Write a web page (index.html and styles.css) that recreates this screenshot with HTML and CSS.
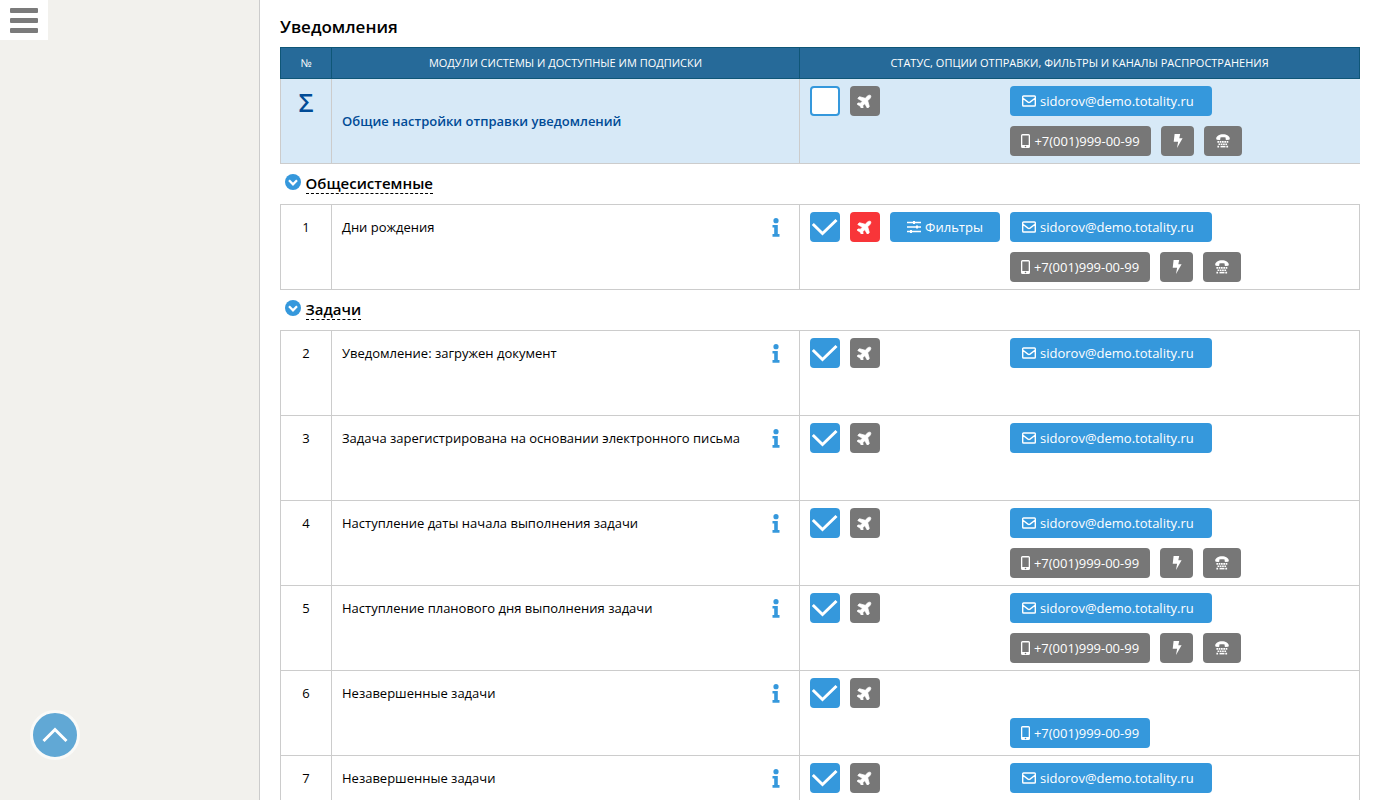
FILE: index.html
```html
<!DOCTYPE html>
<html lang="ru">
<head>
<meta charset="utf-8">
<title>Уведомления</title>
<link rel="stylesheet" href="styles.css">
</head>
<body>
<svg class="sprite" aria-hidden="true">
  <symbol id="plane" viewBox="0 0 576 512"><path transform="rotate(-45 288 256)" stroke="currentColor" stroke-width="24" d="M480 192H365.710L260.610 8.060A16 16 0 0 0 246.710 0h-65.500c-10.630 0-18.300 10.170-15.380 20.390L214.860 192H112l-43.200-57.600c-3-4-7.800-6.400-12.800-6.400H16C5.600 128-2 137.800.5 147.900L32 256 .5 364.100C-2 374.200 5.600 384 16 384h40c5 0 9.800-2.400 12.800-6.400L112 320h102.860l-49 171.600c-2.900 10.200 4.700 20.400 15.400 20.400h65.500c5.700 0 11-3.100 13.900-8.100L365.710 320H480c35.300 0 96-28.700 96-64s-60.700-64-96-64z"/></symbol>
  <symbol id="mail" viewBox="0 0 14 12"><path d="M1.500 1h11a.8.8 0 0 1 .8.8v8.400a.8.8 0 0 1-.8.8h-11a.8.8 0 0 1-.8-.8V1.800A.8.8 0 0 1 1.500 1zM.9 3.200l5.100 3.900q1 .7 2 0l5.100-3.900" fill="none" stroke="currentColor" stroke-width="1.400"/></symbol>
  <symbol id="phone" viewBox="0 0 9 14"><path fill-rule="evenodd" d="M1.500 0h6A1.500 1.500 0 0 1 9 1.500v11A1.500 1.500 0 0 1 7.500 14h-6A1.500 1.500 0 0 1 0 12.500v-11A1.500 1.500 0 0 1 1.500 0zM1.300 1.400v9.500h6.400V1.400zM4.500 11.700a.8.8 0 1 0 0 1.600.8.8 0 0 0 0-1.600z"/></symbol>
  <symbol id="bolt" viewBox="0 0 10 14"><path d="M1.600 0h5.600L6.300 4.300h3.300L4 14l1.100-6.200H.7z"/></symbol>
  <symbol id="tty" viewBox="0 0 14 14"><path d="M.2 4.800C0 2 3.500.2 7 .2s7 1.800 6.800 4.600l-.5 1-3 .1-.6-.5-.1-1.800c-1.700-.6-3.500-.6-5.200 0l-.1 1.800-.6.5-3-.1z"/><path d="M1.400 7.900h11.300M2.500 10.200h9.200M1.400 12.600h2.300m6.600 0h2.400" fill="none" stroke="currentColor" stroke-width="1.600" stroke-dasharray="1.700 .6"/><path d="M4.500 11.800h5v1.600h-5z"/></symbol>
  <symbol id="sliders" viewBox="0 0 14 12"><path d="M0 1.500h14M0 6h14M0 10.500h14" stroke="currentColor" stroke-width="1.500"/><path d="M6 0h2v3H6zM9 4.500h2v3H9zM3 9h2v3H3z"/></symbol>
  <symbol id="info" viewBox="0 0 8 19"><circle cx="4" cy="2.700" r="2.600"/><path d="M.5 7h5.300v9H7.500v2.800h-7V16h1.700V9.600H.5z"/></symbol>
  <symbol id="down" viewBox="0 0 16 16"><circle cx="8" cy="8" r="8"/><path d="M4 6.300l4 4 4-4" fill="none" stroke="#fff" stroke-width="2.300"/></symbol>
</svg>

<button class="menu" aria-label="Меню"><span></span><span></span><span></span></button>
<aside class="side">
  <a class="up" href="#top" aria-label="Наверх"><svg viewBox="0 0 26 16"><path d="M1.500 14 13 2.500 24.500 14" fill="none" stroke="#fff" stroke-width="3"/></svg></a>
</aside>

<main class="main" id="top">
  <h1 class="title">Уведомления</h1>
  <table class="grid">
    <colgroup><col class="c-num"><col><col class="c-opts"></colgroup>
    <thead>
      <tr><th>№</th><th>Модули системы и доступные им подписки</th><th>Статус, опции отправки, фильтры и каналы распространения</th></tr>
    </thead>
    <tbody>
      <tr class="total">
        <td class="num sigma">Σ</td>
        <td class="name">Общие настройки отправки уведомлений</td>
        <td><div class="opts">
          <input type="checkbox" class="tick" aria-label="Все уведомления">
          <button class="btn" aria-label="В поездке"><svg class="i-plane"><use href="#plane"/></svg></button>
          <button class="btn on mail"><svg class="i-wide"><use href="#mail"/></svg>sidorov@demo.totality.ru</button>
          <div class="phones"><button class="btn phone"><svg class="i-phone"><use href="#phone"/></svg>+7(001)999-00-99</button><button class="btn bolt" aria-label="Быстро"><svg class="i-bolt"><use href="#bolt"/></svg></button><button class="btn tty" aria-label="Телетайп"><svg class="i-tty"><use href="#tty"/></svg></button></div>
        </div></td>
      </tr>
      <tr class="group"><td colspan="3"><div class="head"><svg class="i-down"><use href="#down"/></svg><a href="#sys">Общесистемные</a></div></td></tr>
      <tr>
        <td class="num">1</td>
        <td><div class="name">Дни рождения<svg class="i-info"><use href="#info"/></svg></div></td>
        <td><div class="opts">
          <input type="checkbox" class="tick" checked aria-label="Дни рождения">
          <button class="btn red" aria-label="В поездке"><svg class="i-plane"><use href="#plane"/></svg></button>
          <button class="btn on filter"><svg class="i-wide"><use href="#sliders"/></svg>Фильтры</button>
          <button class="btn on mail"><svg class="i-wide"><use href="#mail"/></svg>sidorov@demo.totality.ru</button>
          <div class="phones"><button class="btn phone"><svg class="i-phone"><use href="#phone"/></svg>+7(001)999-00-99</button><button class="btn bolt" aria-label="Быстро"><svg class="i-bolt"><use href="#bolt"/></svg></button><button class="btn tty" aria-label="Телетайп"><svg class="i-tty"><use href="#tty"/></svg></button></div>
        </div></td>
      </tr>
      <tr class="group"><td colspan="3"><div class="head"><svg class="i-down"><use href="#down"/></svg><a href="#tasks">Задачи</a></div></td></tr>
      <tr>
        <td class="num">2</td>
        <td><div class="name">Уведомление: загружен документ<svg class="i-info"><use href="#info"/></svg></div></td>
        <td><div class="opts">
          <input type="checkbox" class="tick" checked aria-label="Уведомление: загружен документ">
          <button class="btn" aria-label="В поездке"><svg class="i-plane"><use href="#plane"/></svg></button>
          <button class="btn on mail"><svg class="i-wide"><use href="#mail"/></svg>sidorov@demo.totality.ru</button>
        </div></td>
      </tr>
      <tr>
        <td class="num">3</td>
        <td><div class="name">Задача зарегистрирована на основании электронного письма<svg class="i-info"><use href="#info"/></svg></div></td>
        <td><div class="opts">
          <input type="checkbox" class="tick" checked aria-label="Задача зарегистрирована">
          <button class="btn" aria-label="В поездке"><svg class="i-plane"><use href="#plane"/></svg></button>
          <button class="btn on mail"><svg class="i-wide"><use href="#mail"/></svg>sidorov@demo.totality.ru</button>
        </div></td>
      </tr>
      <tr>
        <td class="num">4</td>
        <td><div class="name">Наступление даты начала выполнения задачи<svg class="i-info"><use href="#info"/></svg></div></td>
        <td><div class="opts">
          <input type="checkbox" class="tick" checked aria-label="Наступление даты начала">
          <button class="btn" aria-label="В поездке"><svg class="i-plane"><use href="#plane"/></svg></button>
          <button class="btn on mail"><svg class="i-wide"><use href="#mail"/></svg>sidorov@demo.totality.ru</button>
          <div class="phones"><button class="btn phone"><svg class="i-phone"><use href="#phone"/></svg>+7(001)999-00-99</button><button class="btn bolt" aria-label="Быстро"><svg class="i-bolt"><use href="#bolt"/></svg></button><button class="btn tty" aria-label="Телетайп"><svg class="i-tty"><use href="#tty"/></svg></button></div>
        </div></td>
      </tr>
      <tr>
        <td class="num">5</td>
        <td><div class="name">Наступление планового дня выполнения задачи<svg class="i-info"><use href="#info"/></svg></div></td>
        <td><div class="opts">
          <input type="checkbox" class="tick" checked aria-label="Наступление планового дня">
          <button class="btn" aria-label="В поездке"><svg class="i-plane"><use href="#plane"/></svg></button>
          <button class="btn on mail"><svg class="i-wide"><use href="#mail"/></svg>sidorov@demo.totality.ru</button>
          <div class="phones"><button class="btn phone"><svg class="i-phone"><use href="#phone"/></svg>+7(001)999-00-99</button><button class="btn bolt" aria-label="Быстро"><svg class="i-bolt"><use href="#bolt"/></svg></button><button class="btn tty" aria-label="Телетайп"><svg class="i-tty"><use href="#tty"/></svg></button></div>
        </div></td>
      </tr>
      <tr>
        <td class="num">6</td>
        <td><div class="name">Незавершенные задачи<svg class="i-info"><use href="#info"/></svg></div></td>
        <td><div class="opts">
          <input type="checkbox" class="tick" checked aria-label="Незавершенные задачи">
          <button class="btn" aria-label="В поездке"><svg class="i-plane"><use href="#plane"/></svg></button>
          <div class="phones"><button class="btn on phone"><svg class="i-phone"><use href="#phone"/></svg>+7(001)999-00-99</button></div>
        </div></td>
      </tr>
      <tr>
        <td class="num">7</td>
        <td><div class="name">Незавершенные задачи<svg class="i-info"><use href="#info"/></svg></div></td>
        <td><div class="opts">
          <input type="checkbox" class="tick" checked aria-label="Незавершенные задачи">
          <button class="btn" aria-label="В поездке"><svg class="i-plane"><use href="#plane"/></svg></button>
          <button class="btn on mail"><svg class="i-wide"><use href="#mail"/></svg>sidorov@demo.totality.ru</button>
        </div></td>
      </tr>
    </tbody>
  </table>
</main>
</body>
</html>
```
FILE: styles.css
```css
* { box-sizing: border-box; }
body {
  margin: 0;
  height: 100vh;
  display: flex;
  overflow: hidden;
  background: #fff;
  color: #000;
  font: 13px/20px "Trebuchet MS", "Open Sans", sans-serif;
}
svg { fill: currentColor; flex: none; }
.sprite { position: absolute; width: 0; height: 0; }

.side {
  flex: none;
  width: 260px;
  display: flex;
  align-items: flex-end;
  padding: 0 30px 40px;
  background: #f2f1ed;
  border-right: 1px solid #ccc;
}
.up {
  display: flex;
  align-items: center;
  justify-content: center;
  width: 50px;
  height: 50px;
  border: 3px solid #fafaf8;
  border-radius: 50%;
  background: #61a8d5;
}
.up svg { width: 26px; height: 16px; }
.menu {
  position: fixed;
  top: 0;
  left: 0;
  width: 48px;
  height: 40px;
  padding: 0 10px;
  border: 0;
  background: #fff;
  display: flex;
  flex-direction: column;
  justify-content: center;
  gap: 5px;
}
.menu span { height: 5px; background: #7b7b7b; border-radius: 1px; }

.main {
  flex: 1;
  min-width: 0;
  overflow: auto;
  scrollbar-width: none;
  padding: 15px 20px 0;
}
.title { margin: 0 0 8px; font-size: 17px; line-height: 24px; font-weight: 600; }

.grid { width: 100%; border-collapse: collapse; table-layout: fixed; }
.c-num { width: 51px; }
.c-opts { width: 560px; }
.grid th {
  height: 31px;
  padding: 0;
  background: #266a99;
  border: 1px solid #0f5677;
  color: #fff;
  font-size: 11px;
  line-height: 16px;
  font-weight: 500;
  text-transform: uppercase;
}
.grid td { padding: 7px 10px; border: 1px solid #ccc; vertical-align: top; }
.grid .num { padding-top: 12px; text-align: center; }
.name { display: flex; align-items: center; justify-content: space-between; height: 30px; }
.i-info { width: 8px; height: 19px; margin-right: 9px; color: #3598dc; }

.grid .total td { background: #d7e9f7; border-right-color: #ccc; }
.grid .total td:last-child { border-right-color: #d7e9f7; }
.grid .total td.name {
  display: table-cell;
  vertical-align: middle;
  color: #004b96;
  font-weight: 600;
}
.grid .total .sigma { padding-top: 11px; color: #004b96; font-size: 26px; line-height: 24px; font-weight: 600; }

.grid .group td {
  height: 41px;
  padding: 8px 4px;
  border-left-style: hidden;
  border-right-style: hidden;
}
.head { display: flex; align-items: flex-start; gap: 5px; padding-top: 2px; }
.head a {
  color: #000;
  font-size: 15px;
  line-height: 19px;
  font-weight: 600;
  text-decoration: none;
  border-bottom: 1px dashed #000;
}
.i-down { width: 16px; height: 16px; color: #3598dc; }

.opts {
  display: grid;
  grid-template: 30px 30px / 30px 30px 110px 1fr;
  gap: 10px;
}
.opts .mail { grid-area: 1 / 4; }
.phones { grid-area: 2 / 4; display: flex; gap: 10px; }
.tick {
  appearance: none;
  margin: 0;
  width: 30px;
  height: 30px;
  border: 2px solid #3598dc;
  border-radius: 4px;
  background: #fff;
}
.tick:checked {
  background: #3598dc url("data:image/svg+xml,%3Csvg xmlns='http://www.w3.org/2000/svg' viewBox='0 0 26 26'%3E%3Cpath d='M.8 10 10.500 19.500 24.500 6' fill='none' stroke='%23fff' stroke-width='3'/%3E%3C/svg%3E") center / 26px 26px no-repeat;
}
.btn {
  display: flex;
  align-items: center;
  justify-content: center;
  gap: 4px;
  height: 30px;
  padding: 0;
  border: 0;
  border-radius: 4px;
  background: #777;
  color: #fff;
  font: inherit;
  white-space: nowrap;
}
.btn.on { background: #3598dc; }
.btn.red { background: #f83539; }
.btn.mail { width: 202px; padding: 0 12px; justify-content: flex-start; }
.btn.phone { width: 140px; }
.total .btn.phone { width: 141px; }
.btn.bolt { width: 33px; }
.btn.tty { width: 38px; }
.i-plane { width: 16px; height: 14px; }
.i-wide { width: 14px; height: 12px; }
.i-phone { width: 9px; height: 14px; }
.i-bolt { width: 10px; height: 14px; }
.i-tty { width: 14px; height: 14px; }
```
